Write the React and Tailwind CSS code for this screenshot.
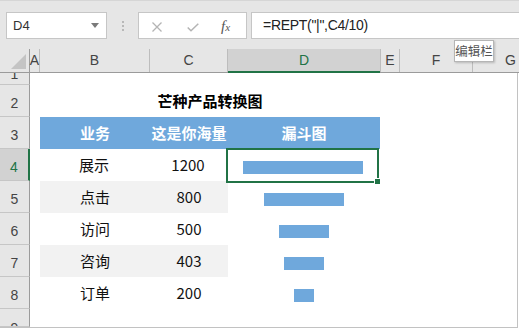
import React from "react";

const CJK = "font-['Noto_Sans_CJK_SC','Noto_Sans',sans-serif]";
const LAT = "font-['Liberation_Sans','Noto_Sans_CJK_SC',sans-serif]";

function RowHead({ n, h, selected, pb = "pb-[6px]", align = "items-end" }) {
  return (
    <div
      className={`${h} w-[30px] shrink-0 flex ${align} justify-center overflow-hidden border-b border-[#c6c6c6] ${pb} ${LAT} text-[14px] leading-none ${
        selected
          ? "bg-[#d2d2d2] text-[#217346] border-r-2 border-r-[#217346]"
          : "bg-[#e6e6e6] text-[#444] border-r border-r-[#9b9b9b]"
      }`}
    >
      {n}
    </div>
  );
}

const data = [
  { name: "展示", v: "1200", bar: "w-[120px]", gray: false, sel: true },
  { name: "点击", v: "800", bar: "w-[80px]", gray: true },
  { name: "访问", v: "500", bar: "w-[50px]", gray: false },
  { name: "咨询", v: "403", bar: "w-[40px]", gray: true },
  { name: "订单", v: "200", bar: "w-[20px]", gray: false },
];

export default function App() {
  return (
    <div className="relative w-[519px] h-[329px] bg-white overflow-hidden">
      {/* toolbar */}
      <div className="h-[49px] bg-[#e6e6e6] border-t border-[#d6d6d6] flex items-start pt-[11px]">
        <div className="ml-[6px] w-[101px] h-[27px] bg-white border border-[#c6c6c6] flex items-center pl-[6px] pr-[7px]">
          <span className={`${LAT} text-[13px] text-[#333] flex-1`}>D4</span>
          <svg width="8" height="5" viewBox="0 0 8 5">
            <path d="M0 0 L8 0 L4 5 Z" fill="#7a7a7a" />
          </svg>
        </div>
        <div className="w-[31px] h-[27px] flex flex-col items-center justify-center gap-[2px]">
          <div className="w-[2px] h-[2px] bg-[#b8b8b8]" />
          <div className="w-[2px] h-[2px] bg-[#b8b8b8]" />
          <div className="w-[2px] h-[2px] bg-[#b8b8b8]" />
        </div>
        <div className="w-[109px] h-[27px] bg-white border border-[#c6c6c6] flex items-center pt-[3px]">
          <svg className="ml-[13px]" width="10" height="10" viewBox="0 0 10 10">
            <path d="M0.5 0.5 L9.5 9.5 M9.5 0.5 L0.5 9.5" stroke="#b4b4b4" strokeWidth="1.3" />
          </svg>
          <svg className="ml-[25px]" width="12" height="9" viewBox="0 0 12 9">
            <path d="M0.7 4.5 L4 7.8 L11.3 0.7" stroke="#b4b4b4" strokeWidth="1.5" fill="none" />
          </svg>
          <span className="ml-[22px] font-['Liberation_Serif',serif] italic text-[15px] leading-none text-[#555] -mt-[2px]">
            f<span className="text-[11px]">x</span>
          </span>
        </div>
        <div className="ml-[4px] flex-1 h-[27px] bg-white border border-[#c6c6c6] border-r-0 flex items-center pl-[11px]">
          <span className={`${LAT} text-[14px] tracking-[-0.3px] text-[#222]`}>=REPT("|",C4/10)</span>
        </div>
      </div>

      {/* column header */}
      <div className={`h-[24px] flex bg-[#e6e6e6] border-b border-[#9b9b9b] ${LAT} text-[14px] text-[#444]`}>
        <div className="w-[30px] shrink-0 border-r border-[#9b9b9b] flex items-end justify-end pr-[3px] pb-[3px]">
          <svg width="15" height="15" viewBox="0 0 15 15">
            <path d="M15 0 L15 15 L0 15 Z" fill="#c4c4c4" />
          </svg>
        </div>
        <div className="w-[10px] shrink-0 border-r border-[#bdbdbd] flex items-center justify-center">A</div>
        <div className="w-[110px] shrink-0 border-r border-[#bdbdbd] flex items-center justify-center">B</div>
        <div className="w-[78px] shrink-0 border-r border-[#bdbdbd] flex items-center justify-center">C</div>
        <div className="w-[152px] shrink-0 bg-[#d2d2d2] border-b-2 border-[#217346] -mb-[1px] flex items-center justify-center text-[#217346]">D</div>
        <div className="w-[20px] shrink-0 border-x border-[#bdbdbd] flex items-center justify-center">E</div>
        <div className="w-[73px] shrink-0 border-r border-[#bdbdbd] flex items-center justify-center">F</div>
        <div className="flex-1 flex items-center justify-start pl-[32px]">G</div>
      </div>

      {/* sheet body */}
      <div className="border-b border-[#c2c2c2] border-r border-r-[#c2c2c2] w-[518px]">
        {/* row 1 */}
        <div className="flex">
          <RowHead n="1" h="h-[12px]" pb="pb-[3px]" />
          <div className="flex-1" />
        </div>
        {/* row 2 title */}
        <div className="flex">
          <RowHead n="2" h="h-[32px]" />
          <div className="w-[10px] shrink-0" />
          <div className={`w-[340px] shrink-0 flex items-center justify-center ${CJK} font-bold text-[15px] text-black`}>
            芒种产品转换图
          </div>
          <div className="flex-1" />
        </div>
        {/* row 3 header */}
        <div className="flex">
          <RowHead n="3" h="h-[32px]" />
          <div className="w-[10px] shrink-0" />
          <div className={`w-[340px] shrink-0 flex bg-[#6fa8dc] ${CJK} font-bold text-[15px] text-white`}>
            <div className="w-[110px] flex items-center justify-center">业务</div>
            <div className="w-[78px] flex items-center justify-center">这是你海量</div>
            <div className="w-[152px] flex items-center justify-center">漏斗图</div>
          </div>
          <div className="flex-1" />
        </div>
        {data.map((r, i) => (
          <div className="flex" key={i}>
            <RowHead n={String(i + 4)} h="h-[32px]" selected={r.sel} />
            <div className={r.sel ? "w-[9px] shrink-0" : "w-[10px] shrink-0"} />
            <div
              className={`w-[188px] shrink-0 flex ${CJK} text-[15px] text-[#111] ${
                r.gray ? "bg-[#f2f2f2]" : "bg-white"
              }`}
            >
              <div className="w-[110px] flex items-center justify-center">{r.name}</div>
              <div className="w-[78px] flex items-center justify-center">{r.v}</div>
            </div>
            <div className="relative w-[152px] shrink-0 flex items-center justify-center">
              <div className={`${r.bar} h-[13px] mt-[5px] bg-[#6fa8dc]`} />
              {r.sel && (
                <div className="absolute -left-[1px] -top-[1px] w-[153px] h-[35px] border-2 border-[#217346]">
                  <div className="absolute -right-[4px] -bottom-[4px] w-[7px] h-[7px] bg-[#217346] border border-white" />
                </div>
              )}
            </div>
            <div className="flex-1" />
          </div>
        ))}
        {/* row 9 */}
        <div className="flex">
          <RowHead n="9" h="h-[18px]" pb="pb-0 pt-[12px]" align="items-start" />
          <div className="flex-1" />
        </div>
      </div>

      {/* tooltip */}
      <div className={`absolute left-[454px] top-[40px] w-[40px] h-[22px] bg-white border border-[#b5b5b5] shadow-[1px_1px_2px_rgba(0,0,0,0.2)] flex items-center justify-center ${CJK} text-[12.5px] text-[#555]`}>
        编辑栏
      </div>
    </div>
  );
}
